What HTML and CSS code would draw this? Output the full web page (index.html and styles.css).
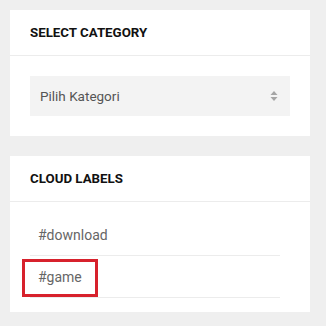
FILE: index.html
```html
<!DOCTYPE html>
<html lang="id">
<head>
    <meta charset="UTF-8">
    <meta name="viewport" content="width=device-width, initial-scale=1.0">
    <title>Sidebar</title>
    <link rel="stylesheet" href="styles.css">
</head>
<body>
    <div class="sidebar">
        <div class="widget">
            <div class="widget-title">SELECT CATEGORY</div>
            <div class="widget-body">
                <div class="select-box">
                    <span>Pilih Kategori</span>
                    <svg class="arrows" width="8" height="12" viewBox="0 0 8 12">
                        <path d="M4 1 L7.5 5 L0.5 5 Z" fill="#a5a5a5"/>
                        <path d="M4 11 L7.5 7 L0.5 7 Z" fill="#a5a5a5"/>
                    </svg>
                </div>
            </div>
        </div>

        <div class="widget">
            <div class="widget-title">CLOUD LABELS</div>
            <div class="widget-body labels">
                <ul class="label-list">
                    <li>#download</li>
                    <li class="marked">#game<span class="highlight"></span></li>
                </ul>
            </div>
        </div>
    </div>
</body>
</html>
```

FILE: styles.css
```css
body {
    margin: 0;
    background: #efefef;
    font-family: Roboto, "Liberation Sans", sans-serif;
}
.sidebar {
    width: 300px;
    padding: 10px;
    display: flex;
    flex-direction: column;
    gap: 20px;
}
.widget {
    background: #fff;
}
.widget-title {
    height: 45px;
    line-height: 46px;
    padding: 0 20px;
    font-size: 13.3px;
    font-weight: bold;
    color: #111;
    border-bottom: 1px solid #ececec;
}
.widget-body {
    padding: 20px;
}
.select-box {
    height: 40px;
    background: #f3f3f3;
    display: flex;
    align-items: center;
    justify-content: space-between;
    padding: 0 12px 0 10px;
    font-size: 13.5px;
    color: #555;
}
.arrows {
    display: block;
}
.labels {
    padding: 12px 30px 14px 20px;
}
.label-list {
    list-style: none;
    margin: 0;
    padding: 0;
}
.label-list li {
    position: relative;
    height: 41px;
    line-height: 42px;
    padding-left: 8px;
    font-size: 14px;
    color: #666;
    border-bottom: 1px solid #ececec;
}
.highlight {
    position: absolute;
    left: -8px;
    top: 3px;
    width: 70px;
    height: 32px;
    border: 3px solid #d7212c;
}
```
